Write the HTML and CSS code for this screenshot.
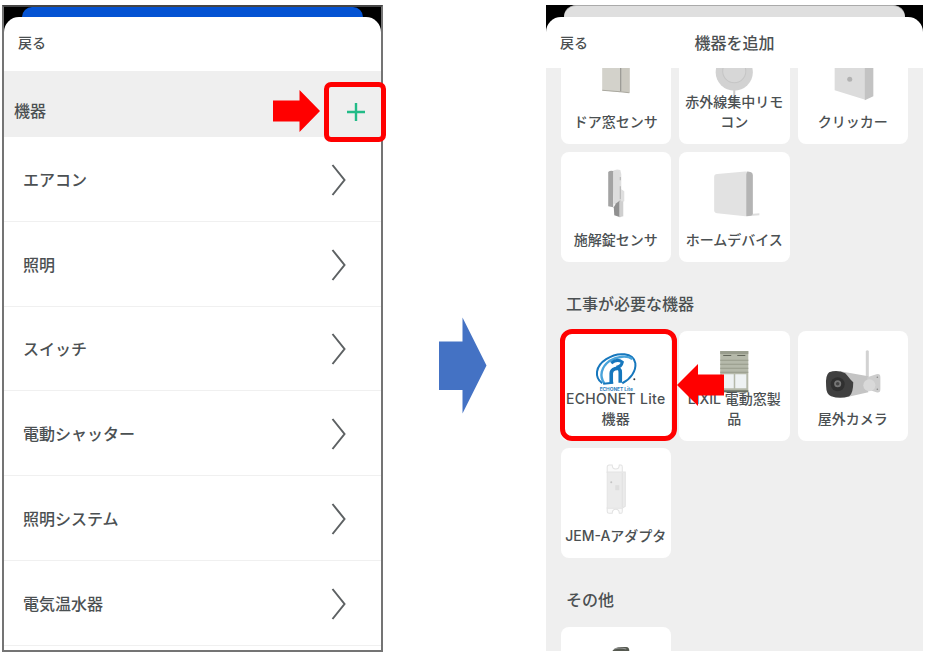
FILE: index.html
```html
<!DOCTYPE html>
<html lang="ja">

<head>
    <meta charset="UTF-8">
    <meta name="viewport" content="width=device-width, initial-scale=1.0">
    <title>機器を追加</title>
    <link rel="stylesheet" href="styles.css">
</head>

<body>
    <!-- Device list -->
    <section class="phone phone-list">
        <div class="backdrop backdrop-blue"></div>
        <header class="sheet-header">
            <span class="back">戻る</span>
        </header>
        <div class="list-header">
            <h2>機器</h2>
            <div class="add-button">
                <svg width="20" height="20" viewBox="0 0 20 20"><path d="M10 1v18M1 10h18" stroke="#22bb87" stroke-width="2.4" fill="none"/></svg>
                <div class="mark mark-add"></div>
                <svg class="pointer pointer-right" width="47" height="42" viewBox="0 0 47 42"><path d="M0 10.5h26.500V0L47 21 26.500 42V31.500H0z" fill="#f00"/></svg>
            </div>
        </div>
        <ul class="device-list">
            <li>エアコン<svg class="chevron" viewBox="0 0 16 32"><path d="M1.500 1L13.500 16 1.500 31"/></svg></li>
            <li>照明<svg class="chevron" viewBox="0 0 16 32"><path d="M1.500 1L13.500 16 1.500 31"/></svg></li>
            <li>スイッチ<svg class="chevron" viewBox="0 0 16 32"><path d="M1.500 1L13.500 16 1.500 31"/></svg></li>
            <li>電動シャッター<svg class="chevron" viewBox="0 0 16 32"><path d="M1.500 1L13.500 16 1.500 31"/></svg></li>
            <li>照明システム<svg class="chevron" viewBox="0 0 16 32"><path d="M1.500 1L13.500 16 1.500 31"/></svg></li>
            <li>電気温水器<svg class="chevron" viewBox="0 0 16 32"><path d="M1.500 1L13.500 16 1.500 31"/></svg></li>
        </ul>
    </section>

    <svg class="step-arrow" width="48" height="97" viewBox="0 0 48 97"><path d="M0 24.500h23.500V0.500L47.500 48.500 23.500 96.500V73H0z" fill="#4472c4"/></svg>

    <!-- Add device -->
    <section class="phone phone-add">
        <div class="backdrop backdrop-gray"></div>
        <header class="sheet-header">
            <span class="back">戻る</span>
            <h1>機器を追加</h1>
        </header>
        <main class="catalog">
            <div class="cards cards-scrolled">
                <div class="card">
                    <svg viewBox="0 0 110 110">
                        <path d="M41 20h18v38l-18-2z" fill="#d3d2cb"/>
                        <path d="M60 20h8.500v38.500l-8.500-1z" fill="#cbc9c0"/>
                        <path d="M59.500 20v37.500" stroke="#8d8b84" stroke-width="1.200"/>
                        <path d="M41 56l18 1.500 9 1" stroke="#aaa89f" fill="none"/>
                    </svg>
                    <p>ドア窓センサ</p>
                </div>
                <div class="card">
                    <svg viewBox="0 0 110 110">
                        <circle cx="55" cy="38" r="18.500" fill="#d2d2d2"/>
                        <circle cx="55" cy="37" r="11.500" fill="#d7d7d7" stroke="#c6c6c6"/>
                        <path d="M55 56v10" stroke="#ccc" stroke-width="2"/>
                    </svg>
                    <p>赤外線集中リモコン</p>
                </div>
                <div class="card">
                    <svg viewBox="0 0 110 110">
                        <path d="M36.500 20H67v45.500L36.500 56z" fill="#dcdcdc"/>
                        <path d="M66.500 20H75v42l-8.500 4z" fill="#c3c3c3"/>
                        <circle cx="51.500" cy="45" r="2.500" fill="#b2b2b2"/>
                    </svg>
                    <p>クリッカー</p>
                </div>
                <div class="card">
                    <svg viewBox="0 0 110 110">
                        <path d="M50 20q4-4 9-2l1 4v15l3 2v10l-3 1v8l-6 1z" fill="#dfdfdf"/>
                        <path d="M47 20q2-2 5-1v36l-5-1z" fill="#a3a3a3"/>
                        <path d="M52 20v32l6-3V19z" fill="#ddd"/>
                        <path d="M59 25v3M59 34v13" stroke="#b3b3b3"/>
                        <path d="M52.500 55l2.500-4 4-3v17l-6-2z" fill="#909090"/>
                        <path d="M58 49h4v15l-4 1z" fill="#cfcfcf"/>
                    </svg>
                    <p>施解錠センサ</p>
                </div>
                <div class="card">
                    <svg viewBox="0 0 110 110">
                        <path d="M68 62l12-1v2l-12 1z" fill="#ddd"/>
                        <path d="M38 22l28-2.500 5 .5q2 .5 2 3v38q0 2-2 2.500l-5 .5-28-3q-3-.5-3-3V25q0-3 3-3z" fill="#e2e2e2"/>
                        <path d="M68 19.500l3 .5q2.500.5 2.500 3v38q0 2-2 2.500l-4.500.5V22z" fill="#b4b4b4"/>
                    </svg>
                    <p>ホームデバイス</p>
                </div>
            </div>

            <h2>工事が必要な機器</h2>
            <div class="cards">
                <div class="card">
                    <svg viewBox="0 0 110 110">
                        <g fill="none" stroke="#1677bd">
                            <path d="M41 52c-8-6-7-17 4-24 12-8 27-6 29 4 1 8-5 16-13 20" stroke-width="2"/>
                            <path d="M43 52c-5-7-3-16 5-22 8-5 18-6 23-2" stroke="#49a3da" stroke-width="2.400"/>
                            <path d="M50 52V42q0-3 4-4.500 5-1.500 5 4v10" stroke-width="3.600"/>
                            <path d="M50 32q6-5 11-1-1 5-6 5" stroke-width="3"/>
                            <path d="M42 52.500l10-1" stroke-width="2"/>
                        </g>
                        <circle cx="73" cy="48" r="1" fill="#333"/>
                        <text class="logo-text" x="38.500" y="59.500" textLength="33" lengthAdjust="spacingAndGlyphs">ECHONET Lite</text>
                    </svg>
                    <p class="latin">ECHONET Lite機器</p>
                    <div class="mark mark-card"></div>
                    <svg class="pointer pointer-left" width="47" height="42" viewBox="0 0 47 42"><path d="M47 10.500H21V0L0 21l21 21V31.500h26z" fill="#f00"/></svg>
                </div>
                <div class="card">
                    <svg viewBox="0 0 110 110">
                        <path d="M41 20h28v41H41z" fill="#b5b9aa"/>
                        <path d="M41 20h28v3H41z" fill="#989c8d"/>
                        <path d="M44 24.500h8M58 24.500h8" stroke="#62665a"/>
                        <path d="M41 29h28M41 33h28M41 37h28M41 41h28" stroke="#969a8b"/>
                        <path d="M43 43h11.500v14H43zM56 43h11v14H56z" fill="#eef2f3"/>
                        <path d="M41 60h28" stroke="#686e63" stroke-width="2"/>
                    </svg>
                    <p>LIXIL 電動窓製品</p>
                </div>
                <div class="card">
                    <svg viewBox="0 0 110 110">
                        <path d="M67.500 20q1.500-1.500 3 0v31h-3z" fill="#d2d2d2"/>
                        <path d="M42 40l28 5v16l-22 5z" fill="#c4c4c4"/>
                        <path d="M69 46l9-3q4-1 4 3v12q0 4-4 3l-9-3z" fill="#cdcdcd"/>
                        <circle cx="71" cy="54" r="6" fill="#d9d9d9"/>
                        <circle cx="79" cy="46" r=".8" fill="#888"/>
                        <circle cx="79" cy="58" r=".8" fill="#888"/>
                        <path d="M31 41q8-3 16 1 2 2 5 6l3 3q0 11-4 14-9 3-18 0-5-2-5-10-1-11 3-14z" fill="#404040"/>
                        <circle cx="39.500" cy="53" r="7" fill="#303030"/>
                        <circle cx="39.500" cy="52.500" r="3.500" fill="#777"/>
                        <circle cx="39.500" cy="52.500" r="1.800" fill="#444"/>
                    </svg>
                    <p>屋外カメラ</p>
                </div>
                <div class="card">
                    <svg viewBox="0 0 110 110">
                        <path d="M46 25v-6q0-2 2-2h3q0 4 3.500 4T58 17h2q1 0 1 2v6M46 59v4q0 2 2 2h3q0-4 3.500-4t3.500 4h2q1 0 1-2v-4" fill="#fafafa" stroke="#e2e2e2"/>
                        <path d="M46 24h18v34l-3 2H46z" fill="#ebebeb" stroke="#e3e3e3"/>
                        <path d="M61 25v34" stroke="#e0e0e0"/>
                        <circle cx="50" cy="34" r="1" fill="#c4c4c4"/>
                        <path d="M54 37h4v5h-4z" fill="#dedede"/>
                    </svg>
                    <p class="latin adapter">JEM-Aアダプタ</p>
                </div>
            </div>

            <h2>その他</h2>
            <div class="cards">
                <div class="card">
                    <svg viewBox="0 0 110 110">
                        <path d="M51 24q3-4 9-4h5q3 0 3 4z" fill="#555950"/>
                        <path d="M53 22q5-2 12 0" stroke="#999" fill="none"/>
                    </svg>
                </div>
            </div>
        </main>
    </section>
</body>

</html>
```
FILE: styles.css
```css
* {
    box-sizing: border-box;
}

body {
    display: flex;
    align-items: flex-start;
    width: 927px;
    height: 655px;
    margin: 0;
    padding: 5px 4px 0 2px;
    overflow: hidden;
    background: #fff;
    color: #4b5052;
    font-family: Inter, "Noto Sans CJK JP", sans-serif;
    font-size: 16px;
    font-weight: 500;
}

h1,
h2,
p,
ul {
    margin: 0;
    padding: 0;
    font-size: 16px;
    font-weight: 500;
}

/* Phone frames */
.phone {
    display: flex;
    flex-direction: column;
    flex: none;
}

.phone-list {
    width: 381px;
    height: 647px;
    border: 2px solid #747474;
    border-top-color: #454545;
    background: linear-gradient(#000 40px, #fff 40px);
}

.phone-add {
    width: 377px;
    height: 646px;
    background: linear-gradient(#000 40px, #efefef 40px);
    overflow: hidden;
}

.backdrop {
    flex: none;
    height: 10px;
    margin: 0 18px;
    border-radius: 10px 10px 0 0;
}

.backdrop-blue {
    background: #0453d3;
}

.backdrop-gray {
    height: 12px;
    border-top: 1px solid #aaa;
    border-radius: 12px 12px 0 0;
    background: #dfdfdf;
}

.sheet-header {
    display: grid;
    grid-template-columns: 1fr auto 1fr;
    align-items: center;
    flex: none;
    height: 54px;
    padding: 0 14px 5px;
    border-radius: 15px 15px 0 0;
    background: #fff;
}

.phone-add .sheet-header {
    height: 51px;
    padding-bottom: 2px;
}

.back {
    font-size: 14px;
}

/* Device list */
.list-header {
    display: flex;
    align-items: center;
    justify-content: space-between;
    flex: none;
    height: 66px;
    padding: 15px 15px 0 10px;
    background: #efefef;
}

.list-header h2 {
    padding-bottom: 3px;
}

.add-button {
    display: flex;
    position: relative;
}

.device-list {
    list-style: none;
}

.device-list li {
    display: flex;
    align-items: center;
    justify-content: space-between;
    height: 84.8px;
    padding: 0 34px 0 19px;
    border-bottom: 1px solid #f0f0f0;
}

.chevron {
    width: 16px;
    height: 32px;
    margin-top: 2px;
    fill: none;
    stroke: #5d6163;
    stroke-width: 2;
}

.step-arrow {
    flex: none;
    margin: 312px 59px 0 56px;
}

/* Device catalog */
.catalog {
    flex: 1;
    min-height: 0;
    overflow: hidden;
    padding: 0 14.5px;
}

.catalog h2 {
    padding: 30px 5.5px 15px;
    line-height: 24px;
}

.cards {
    display: grid;
    grid-template-columns: repeat(3, 110.5px);
    grid-auto-rows: 110px;
    gap: 7.5px 8px;
}

.cards-scrolled {
    margin-top: -34px;
}

/* Picture and label share one cell, long labels run over the picture */
.card {
    display: grid;
    grid-template: 110px / 110.5px;
    position: relative;
    border-radius: 8px;
    background: #fff;
}

.card > * {
    grid-area: 1 / 1;
}

.card p {
    align-self: end;
    z-index: 1;
    padding: 0 4px 12px;
    font-size: 14px;
    line-height: 20px;
    text-align: center;
}

.card .latin {
    padding: 0 2px 12px;
    letter-spacing: 0.3px;
}

.card .adapter {
    letter-spacing: 0;
}

.logo-text {
    fill: #2c7fc0;
    font-size: 5px;
    font-weight: 700;
}

/* Red marks over the screens */
.mark {
    position: absolute;
    z-index: 2;
    border: 5px solid #f00;
}

.mark-add {
    top: -20px;
    left: -22px;
    width: 62px;
    height: 60px;
    border-radius: 7px;
}

.mark-card {
    top: -2px;
    left: -1px;
    width: 117px;
    height: 112px;
    border-radius: 12px;
}

.pointer {
    position: absolute;
    z-index: 3;
}

.pointer-right {
    top: -12px;
    left: -73px;
}

.pointer-left {
    top: 33px;
    left: 116px;
}
```
